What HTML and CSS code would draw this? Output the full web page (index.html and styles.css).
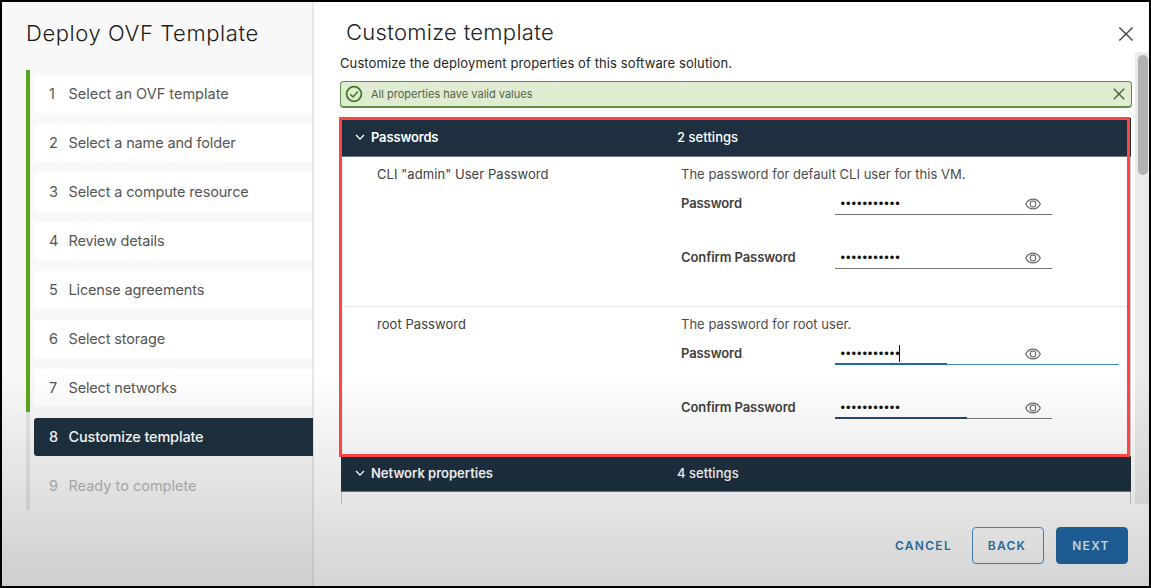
FILE: index.html
```html
<!DOCTYPE html>
<html lang="en">
<head>
<meta charset="utf-8">
<title>Deploy OVF Template</title>
<link rel="stylesheet" href="styles.css">
</head>
<body>
<div class="wizard">
  <aside class="sidebar">
    <h1 class="sidebar-title">Deploy OVF Template</h1>
    <ol class="steps">
      <li class="step done"><div class="step-box"><span class="num">1</span><span class="wider">Select an OVF template</span></div></li>
      <li class="step done"><div class="step-box"><span class="num">2</span>Select a name and folder</div></li>
      <li class="step done"><div class="step-box"><span class="num">3</span>Select a compute resource</div></li>
      <li class="step done"><div class="step-box"><span class="num">4</span>Review details</div></li>
      <li class="step done"><div class="step-box"><span class="num">5</span>License agreements</div></li>
      <li class="step done"><div class="step-box"><span class="num">6</span>Select storage</div></li>
      <li class="step done"><div class="step-box"><span class="num">7</span>Select networks</div></li>
      <li class="step current"><div class="step-box"><span class="num">8</span>Customize template</div></li>
      <li class="step pending"><div class="step-box"><span class="num">9</span><span class="wider">Ready to complete</span></div></li>
    </ol>
  </aside>
  <main class="main">
    <header class="main-head">
      <h2 class="main-title">Customize template</h2>
      <svg class="close" width="16" height="16" viewBox="0 0 16 16"><path d="M1.4 1.4 14.6 14.6M14.6 1.4 1.4 14.6"/></svg>
    </header>
    <div class="scroll">
      <div class="content">
        <p class="intro">Customize the deployment properties of this software solution.</p>
        <div class="alert">
          <svg class="check" width="18" height="18" viewBox="0 0 18 18"><circle cx="9" cy="9" r="7.4"/><path d="M5.2 9.2 8 11.9 12.9 6.4"/></svg>
          <span class="alert-text">All properties have valid values</span>
          <svg class="alert-close" width="12" height="12" viewBox="0 0 12 12"><path d="M.8.8 11.2 11.2M11.2.8.8 11.2"/></svg>
        </div>
        <section class="props">
          <div class="group-head">
            <svg class="caret" width="10" height="6" viewBox="0 0 10 6"><path d="M1 1 5 5 9 1"/></svg>
            <span class="group-name">Passwords</span><span class="group-count">2 settings</span>
          </div>
          <div class="prop">
            <div class="prop-name">CLI "admin" User Password</div>
            <div class="prop-body">
              <p class="prop-desc">The password for default CLI user for this VM.</p>
              <div class="field">
                <span class="label">Password</span>
                <div class="input"><span class="dots">•••••••••••</span>
                  <svg class="eye" width="16" height="12" viewBox="0 0 16 12"><path d="M.7 6C2.400 2.800 5 1.100 8 1.100S13.600 2.800 15.300 6C13.600 9.200 11 10.900 8 10.900S2.400 9.200.7 6Z"/><rect x="5.400" y="3.200" width="5.200" height="5.600" rx="1.800"/></svg></div>
              </div>
              <div class="field">
                <span class="label">Confirm Password</span>
                <div class="input"><span class="dots">•••••••••••</span>
                  <svg class="eye" width="16" height="12" viewBox="0 0 16 12"><path d="M.7 6C2.400 2.800 5 1.100 8 1.100S13.600 2.800 15.300 6C13.600 9.200 11 10.900 8 10.900S2.400 9.200.7 6Z"/><rect x="5.400" y="3.200" width="5.200" height="5.600" rx="1.800"/></svg></div>
              </div>
            </div>
          </div>
          <div class="prop">
            <div class="prop-name">root Password</div>
            <div class="prop-body">
              <p class="prop-desc">The password for root user.</p>
              <div class="field">
                <span class="label">Password</span>
                <div class="input focused"><span class="dots">•••••••••••</span><i class="cursor"></i>
                  <svg class="eye" width="16" height="12" viewBox="0 0 16 12"><path d="M.7 6C2.400 2.800 5 1.100 8 1.100S13.600 2.800 15.300 6C13.600 9.200 11 10.900 8 10.900S2.400 9.200.7 6Z"/><rect x="5.400" y="3.200" width="5.200" height="5.600" rx="1.800"/></svg></div>
              </div>
              <div class="field">
                <span class="label">Confirm Password</span>
                <div class="input fading"><span class="dots">•••••••••••</span>
                  <svg class="eye" width="16" height="12" viewBox="0 0 16 12"><path d="M.7 6C2.400 2.800 5 1.100 8 1.100S13.600 2.800 15.300 6C13.600 9.200 11 10.900 8 10.900S2.400 9.200.7 6Z"/><rect x="5.400" y="3.200" width="5.200" height="5.600" rx="1.800"/></svg></div>
              </div>
            </div>
          </div>
          <div class="group-head second">
            <svg class="caret" width="10" height="6" viewBox="0 0 10 6"><path d="M1 1 5 5 9 1"/></svg>
            <span class="group-name wide">Network properties</span><span class="group-count">4 settings</span>
          </div>
          <div class="next-row"></div>
        </section>
      </div>
      <div class="track"><div class="thumb"></div></div>
    </div>
    <footer class="footer">
      <span class="btn link">CANCEL</span>
      <span class="btn outline">BACK</span>
      <span class="btn primary">NEXT</span>
    </footer>
  </main>
  <div class="shade"></div>
  <div class="highlight"></div>
</div>
</body>
</html>
```
FILE: styles.css
```css
* { box-sizing: border-box; margin: 0; padding: 0; }
body { font-family: Inter, "Open Sans", sans-serif; color: #333; }
svg { display: block; fill: none; flex: none; }

.wizard {
  position: relative;
  display: flex;
  width: 1151px;
  height: 588px;
  border: 2px solid #000;
  background: #fff;
  overflow: hidden;
}

/* step navigation */
.sidebar { width: 312px; background: #f8f8f8; border-right: 2px solid #e8e8e8; padding: 0 0 0 24px; }
.sidebar-title { height: 68px; padding-top: 17px; font-size: 22px; line-height: 28px; font-weight: 300; letter-spacing: .58px; white-space: nowrap; color: #1c1c1c; }
.steps { list-style: none; display: grid; grid-template-rows: repeat(9, 1fr); height: 440px; }
.step { display: flex; align-items: center; border-left: 4px solid #e4e4e4; padding-left: 4px; }
.step.done { border-left-color: #5aa61f; }
.step-box { display: flex; align-items: center; flex: 1; height: 38px; padding: 0 0 1px 15px; border-radius: 3px 0 0 3px; background: #fff; font-size: 14.5px; letter-spacing: -.15px; color: #565656; white-space: nowrap; }
.num { width: 19.5px; }
.wider { letter-spacing: 0; }
.current .step-box { background: #1e303f; color: #fff; font-weight: 500; letter-spacing: -.16px; margin-right: -1px; }
.pending .step-box { background: none; color: #b4b4b4; }

/* page */
.main { flex: 1; display: flex; flex-direction: column; min-width: 0; }
.main-head { display: flex; justify-content: space-between; align-items: flex-start; height: 50px; padding: 16px 15px 0 32px; }
.main-title { font-size: 22px; line-height: 28px; font-weight: 300; letter-spacing: .3px; color: #222; }
.close { margin-top: 7.5px; stroke: #444; stroke-width: 1.4; }
.scroll { display: flex; justify-content: space-between; height: 452px; overflow: hidden; }
.content { width: 792px; margin-left: 26px; }
.track { width: 14px; background: #ebebeb; padding: 3px 1px 0 3px; }
.thumb { height: 120px; border-radius: 5px; background: #b1b1b1; }

.intro { height: 29px; padding-top: 2px; font-size: 13px; line-height: 18px; letter-spacing: .1px; color: #262626; }
.alert { display: flex; align-items: center; height: 27px; padding: 0 6px 0 4px; border: 1.5px solid #5f8f42; border-bottom-width: 2px; border-radius: 4px; background: #dfecd1; }
.alert-text { flex: 1; padding-left: 8px; font-size: 11px; color: #55634f; }
.check { stroke: #3f7d22; stroke-width: 1.8; }
.check path { stroke-width: 1.5; }
.alert-close { stroke: #47623b; stroke-width: 1.4; }

.props { margin: 10px 1px 0; border: solid #ccc; border-width: 0 1px; }
.group-head { display: flex; align-items: center; height: 38.500px; margin: 0 -1px; padding: 1px 0 0 14px; background: #1e303f; border-bottom: 1px solid #6c7882; color: #fff; font-size: 13px; }
.group-head.second { height: 36px; padding-top: 0; }
.caret { stroke: #fff; stroke-width: 1.4; }
.group-name { flex: none; width: 312px; padding-left: 6px; font-weight: 600; letter-spacing: -.16px; }
.group-name.wide { letter-spacing: 0; }
.group-count { font-weight: 500; letter-spacing: .04px; }
.prop { display: flex; height: 149px; padding: 8.500px 0 0 35px; font-size: 13px; line-height: 18px; color: #4c4c4c; }
.prop + .prop { height: 150px; border-top: 1px solid #e8e8e8; }
.prop-name { width: 304px; color: #404040; letter-spacing: .06px; }
.prop-body { flex: 1; }
.prop-desc { letter-spacing: .02px; }
.field { display: flex; height: 54px; align-items: flex-start; }
.label { width: 153.500px; padding-top: 11px; font-weight: 600; letter-spacing: -.09px; color: #404040; }
.input { display: flex; align-items: center; width: 217px; height: 32px; padding: 9px 11px 0 6px; background: linear-gradient(#757575, #757575) bottom / 100% 1.500px no-repeat; }
.input.focused { width: 284px; padding-right: 78px; background: linear-gradient(#1f66b0, #1f66b0) left bottom / 112px 2px no-repeat, linear-gradient(#3d8fc6, #3d8fc6) bottom / 100% 1px no-repeat; }
.input.fading { background: linear-gradient(#26486b, #26486b) left bottom / 132px 2px no-repeat, linear-gradient(#757575, #757575) bottom / 100% 1px no-repeat; }
.dots { padding-top: 1px; font-family: "Liberation Sans", sans-serif; font-size: 13px; letter-spacing: .92px; color: #111; }
.cursor { width: 1.5px; height: 17px; margin-left: -2px; background: #111; }
.eye { margin-left: auto; stroke: #686868; stroke-width: 1.2; }
.next-row { height: 14px; }

.footer { display: flex; justify-content: flex-end; align-items: center; gap: 12px; height: 82px; padding: 0 21px 0 0; }
.btn { display: flex; align-items: center; justify-content: center; width: 72px; height: 37px; padding-right: 2px; border-radius: 4px; border: 1.5px solid transparent; font-size: 12px; font-weight: 600; letter-spacing: 1.3px; color: #2d79b4; }
.link { width: auto; margin-right: 8px; border: 0; padding: 0; }
.outline { border-color: #4d90c4; }
.primary { background: #2169a8; border-color: #2169a8; color: #e4f0fa; }

/* bottom shading and callout frame lie over the dialog */
.shade { position: absolute; inset: 370px 0 0 0; background: linear-gradient(rgba(0,0,0,0), rgba(0,0,0,.17)); }
.highlight { position: absolute; left: 337px; top: 115px; width: 791px; height: 340px; border: 3px solid #ff4444; }
```
